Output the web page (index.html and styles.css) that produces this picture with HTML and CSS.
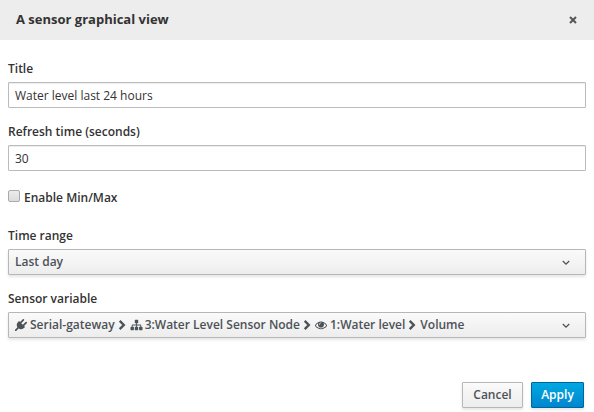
FILE: index.html
```html
<!DOCTYPE html>
<html lang="en">
<head>
<meta charset="utf-8">
<title>A sensor graphical view</title>
<link rel="stylesheet" href="styles.css">
</head>
<body>
<header class="modal-header">
  <h1 class="modal-title">A sensor graphical view</h1>
  <button class="close" aria-label="Close"><svg width="8" height="8" viewBox="0 0 8 8"><path d="M1 1l6 6M7 1l-6 6"/></svg></button>
</header>
<form class="modal-body">
  <div class="form-group">
    <label class="label-title" for="title">Title</label>
    <input class="form-control" id="title" type="text" value="Water level last 24 hours">
  </div>
  <div class="form-group">
    <label class="label-refresh" for="refresh">Refresh time (seconds)</label>
    <input class="form-control" id="refresh" type="text" value="30">
  </div>
  <label class="check-row"><input class="checkbox" type="checkbox"><span class="check-text">Enable Min/Max</span></label>
  <div class="form-group">
    <label>Time range</label>
    <div class="select"><span class="select-value">Last day</span><svg class="caret" width="8" height="6" viewBox="0 0 8 6"><path d="M.8 1L4 4.2 7.2 1"/></svg></div>
  </div>
  <div class="form-group">
    <label>Sensor variable</label>
    <div class="select">
      <div class="path">
        <svg class="icon plug" width="12" height="12" viewBox="0 0 1792 1792"><path d="M1755 453q37 38 37 90.500t-37 90.500l-401 400 150 150-160 160q-163 163-389.500 186.500t-411.500-100.500l-362 362h-181v-181l362-362q-124-185-100.500-411.500t186.500-389.500l160-160 150 150 400-401q38-37 91-37t90 37 37 90.500-37 90.500l-400 401 234 234 401-400q38-37 91-37t90 37z"/></svg>
        <span class="gateway">Serial-gateway</span>
        <svg class="chevron" width="8" height="10" viewBox="0 0 8 10"><path d="M1.700 .9L5.800 5 1.700 9.100"/></svg>
        <svg class="icon sitemap" width="13" height="12" viewBox="0 0 1792 1792"><path d="M1792 1248v320q0 40-28 68t-68 28h-320q-40 0-68-28t-28-68v-320q0-40 28-68t68-28h96v-192h-512v192h96q40 0 68 28t28 68v320q0 40-28 68t-68 28h-320q-40 0-68-28t-28-68v-320q0-40 28-68t68-28h96v-192h-512v192h96q40 0 68 28t28 68v320q0 40-28 68t-68 28h-320q-40 0-68-28t-28-68v-320q0-40 28-68t68-28h96v-192q0-52 38-90t90-38h512v-192h-96q-40 0-68-28t-28-68v-320q0-40 28-68t68-28h320q40 0 68 28t28 68v320q0 40-28 68t-68 28h-96v192h512q52 0 90 38t38 90v192h96q40 0 68 28t28 68z"/></svg>
        <span class="node">3:Water Level Sensor Node</span>
        <svg class="chevron" width="8" height="10" viewBox="0 0 8 10"><path d="M1.700 .9L5.800 5 1.700 9.100"/></svg>
        <svg class="icon eye" width="12" height="12" viewBox="0 0 1792 1792"><path d="M1664 960q-152-236-381-353 61 104 61 225 0 185-131.500 316.500t-316.500 131.500-316.500-131.500-131.500-316.500q0-121 61-225-229 117-381 353 133 205 333.500 326.500t434.500 121.500 434.500-121.500 333.500-326.500zm-720-384q0-20-14-34t-34-14q-125 0-214.500 89.500t-89.500 214.500q0 20 14 34t34 14 34-14 14-34q0-86 61-147t147-61q20 0 34-14t14-34zm848 384q0 34-20 69-140 230-376.500 368.500t-499.500 138.500-499.500-139-376.500-368q-20-35-20-69t20-69q140-229 376.500-368t499.500-139 499.500 139 376.500 368q20 35 20 69z"/></svg>
        <span class="sensor">1:Water level</span>
        <svg class="chevron" width="8" height="10" viewBox="0 0 8 10"><path d="M1.700 .9L5.800 5 1.700 9.100"/></svg>
        <span class="variable">Volume</span>
      </div>
      <svg class="caret" width="8" height="6" viewBox="0 0 8 6"><path d="M.8 1L4 4.200 7.200 1"/></svg>
    </div>
  </div>
</form>
<footer class="modal-footer">
  <button class="btn cancel">Cancel</button>
  <button class="btn apply">Apply</button>
</footer>
</body>
</html>
```
FILE: styles.css
```css
* { box-sizing: border-box; }
body {
  margin: 0;
  height: 412px;
  overflow: hidden;
  background: #fff;
  color: #333;
  font: 600 12px/20px "Open Sans", sans-serif;
}
button, input { font: inherit; }
.modal-header {
  display: flex;
  align-items: center;
  justify-content: space-between;
  height: 40px;
  padding: 0 16px;
  background: #ededed;
}
.modal-title { margin: 0 0 2px; font-size: 13px; font-weight: 700; line-height: 20px; }
.close { display: flex; padding: 0; border: 0; background: none; margin-right: 1px; }
.close path { fill: none; stroke: #555; stroke-width: 2; }
.modal-body { padding: 19px 8px 0; }
.form-group { margin-bottom: 14px; }
.form-group label { display: block; width: max-content; margin-bottom: 3px; }
.form-control {
  display: block;
  width: 100%;
  height: 26px;
  padding: 2px 6px;
  border: 1px solid #bbb;
  border-radius: 1px;
  background: #fff;
  color: #333;
  font-weight: 400;
  box-shadow: inset 0 1px 1px rgba(0, 0, 0, .075);
}
.check-row { display: flex; width: max-content; height: 20px; margin: 17px 0 18px; gap: 4px; }
.checkbox {
  appearance: none;
  width: 12px;
  height: 12px;
  margin: 2px 0 0;
  border: 1px solid #aaa;
  border-radius: 2px;
  background: linear-gradient(#ececec, #dcdcdc);
}
.select {
  display: flex;
  align-items: center;
  justify-content: space-between;
  height: 26px;
  padding: 0 15px 0 6px;
  border: 1px solid #b7b7b7;
  border-radius: 1px;
  background: linear-gradient(#fafafa, #ededed);
  box-shadow: 0 2px 3px rgba(0, 0, 0, .1);
  color: #4d5258;
}
.select-value { margin-bottom: 1px; }
.caret path { fill: none; stroke: #4d5258; stroke-width: 1.3; }
.caret { margin-top: 2px; }
.path { display: flex; align-items: center; white-space: nowrap; }
.icon { fill: #4d5258; }
.plug { margin-right: 3px; }
.sitemap { margin: 0 2px 0 4px; }
.eye { margin: 0 3px 0 4px; }
.chevron { margin-left: 3px; }
.chevron path { fill: none; stroke: #4d5258; stroke-width: 2.4; }
.variable { margin-left: 4px; }
.modal-footer { display: flex; justify-content: flex-end; gap: 8px; padding: 30px 10px 0; }
.btn {
  height: 26px;
  padding: 0 0 1px;
  border: 1px solid #b7b7b7;
  border-radius: 1px;
  background: linear-gradient(#fafafa, #ededed);
  box-shadow: 0 2px 3px rgba(0, 0, 0, .1);
  color: #4d5258;
}
.cancel { width: 61px; }
.apply { width: 53px; border-color: #00659c; background: linear-gradient(#00a8e1, #0085cf); color: #fff; }
```
